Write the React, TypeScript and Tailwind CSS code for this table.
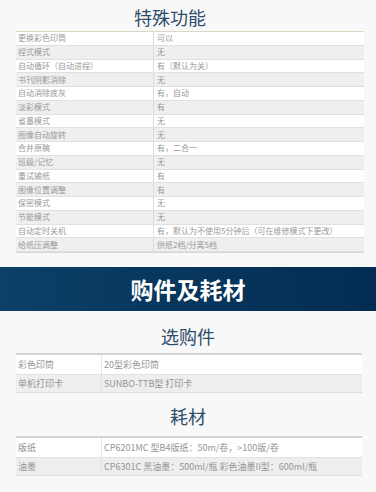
const features: [string, string][] = [
  ['更换彩色印筒', '可以'],
  ['程式模式', '无'],
  ['自动循环（自动进程）', '有（默认为关）'],
  ['书刊阴影消除', '无'],
  ['自动消除底灰', '有，自动'],
  ['淡彩模式', '有'],
  ['省墨模式', '无'],
  ['图像自动旋转', '无'],
  ['合并原稿', '有，二合一'],
  ['班级/记忆', '无'],
  ['重试输纸', '有'],
  ['图像位置调整', '有'],
  ['保密模式', '无'],
  ['节能模式', '无'],
  ['自动定时关机', '有，默认为不使用5分钟后（可在维修模式下更改）'],
  ['给纸压调整', '供纸2档/分离5档'],
];

const options: [string, string][] = [
  ['彩色印筒', '20型彩色印筒'],
  ['单机打印卡', 'SUNBO-TTB型 打印卡'],
];

const supplies: [string, string][] = [
  ['版纸', 'CP6201MC 型B4版纸：50m/卷，>100版/卷'],
  ['油墨', 'CP6301C 黑油墨：500ml/瓶 彩色油墨II型：600ml/瓶'],
];

function SmallTable({ rows }: { rows: [string, string][] }) {
  return (
    <div className="mx-4 w-[346px] border-t-2 border-[#d4d4cc] border-b border-b-[#dddddd]">
      {rows.map(([k, v], i) => (
        <div
          key={k}
          className={`flex h-[18.5px] items-center text-[9px] text-[#959595] ${i % 2 ? 'bg-[#eeeeee] border-t border-[#e2e2e2]' : 'bg-white'}`}
        >
          <div className="w-[86px] h-full flex items-center pl-[2px] border-r border-[#e4e4e4]">{k}</div>
          <div className="pl-[2px] whitespace-nowrap">{v}</div>
        </div>
      ))}
    </div>
  );
}

export default function App() {
  return (
    <div
      className="w-[376px] h-[492px] overflow-hidden bg-[#f8f8f8]"
      style={{ fontFamily: '"Noto Sans CJK SC", "Noto Sans", sans-serif' }}
    >
      <div className="h-[31px] flex items-center justify-center pr-[36px] pt-[2px] text-[18px] leading-none text-[#2c4d6a]">
        特殊功能
      </div>

      <div className="mx-4 w-[348px] border-t border-[#d9d9c6] border-b border-b-[#d6d6d6]">
        {features.map(([k, v], i) => (
          <div
            key={k}
            className={`flex h-[13.75px] items-center text-[8px] leading-none text-[#999999] border-b border-[#e0e0e0] ${i % 2 ? 'bg-[#efefef]' : 'bg-white'}`}
          >
            <div className="w-[138px] h-full flex items-center pl-[2px] border-r border-[#dcdcdc]">{k}</div>
            <div className="pl-[3px] whitespace-nowrap">{v}</div>
          </div>
        ))}
      </div>

      <div className="mt-[14px] h-[44px] flex items-center justify-center bg-gradient-to-r from-[#0c4068] to-[#042c52] text-white text-[23px] font-bold leading-none">
        购件及耗材
      </div>

      <div className="h-[42px] flex items-center justify-center pt-[7px] text-[18px] leading-none text-[#2c4d6a]">
        选购件
      </div>
      <SmallTable rows={options} />

      <div className="h-[43px] flex items-center justify-center pt-[2px] text-[18px] leading-none text-[#2c4d6a]">
        耗材
      </div>
      <SmallTable rows={supplies} />
    </div>
  );
}
